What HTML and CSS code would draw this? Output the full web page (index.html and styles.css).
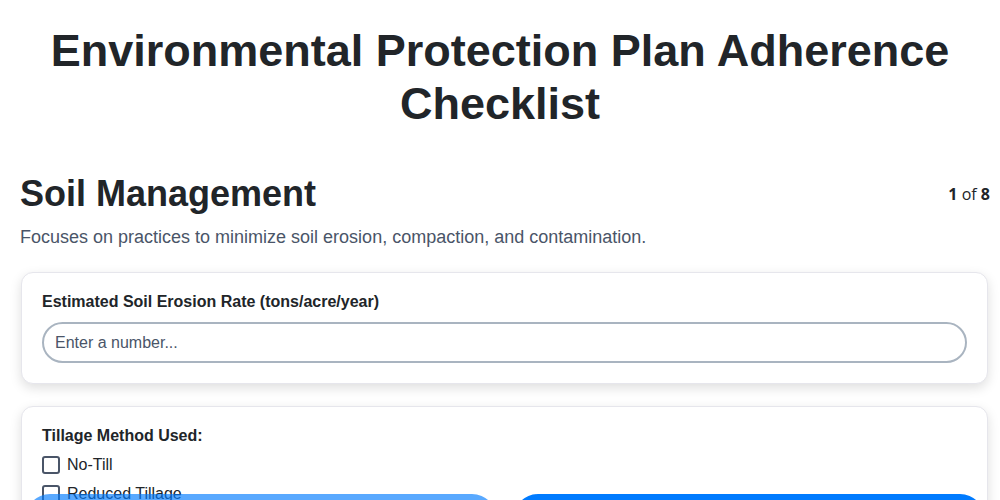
FILE: index.html
```html
<!DOCTYPE html>
<html>
<head>
  <meta charset="UTF-8">
  <title>Environmental Protection Plan Adherence Checklist</title>
  <meta name="viewport" content="width=device-width, initial-scale=1.0">
  <link rel="stylesheet" href="styles.css">
</head>
<body>
  <h1 class="page-title">Environmental Protection Plan Adherence Checklist</h1>

  <div class="section">
    <div class="section-head">
      <h2>Soil Management</h2>
      <div class="step-count"><b>1</b> of <b>8</b></div>
    </div>
    <p class="section-desc">Focuses on practices to minimize soil erosion, compaction, and contamination.</p>

    <div class="question-card">
      <label class="q-label" for="erosionRate">Estimated Soil Erosion Rate (tons/acre/year)</label>
      <input type="text" id="erosionRate" class="q-input" placeholder="Enter a number...">
    </div>

    <div class="question-card">
      <div class="q-label">Tillage Method Used:</div>
      <label class="check-row"><input type="checkbox"> No-Till</label>
      <label class="check-row"><input type="checkbox"> Reduced Tillage</label>
      <label class="check-row"><input type="checkbox"> Conventional Tillage</label>
    </div>
  </div>

  <div class="nav-buttons">
    <button class="nav-btn" disabled>Previous</button>
    <button class="nav-btn">Next</button>
  </div>
</body>
</html>
```

FILE: styles.css
```css
body { font-family: "Liberation Sans", Arial, sans-serif; margin: 0; padding: 0; background-color: #fff; color: #212529; }
.page-title {
  font-size: 45px;
  line-height: 53px;
  text-align: center;
  margin: 24px 40px 0;
}
.section { padding: 0 10px 0 20px; }
.section-head {
  display: flex;
  justify-content: space-between;
  align-items: center;
  margin-top: 42px;
}
.section-head h2 { font-size: 36px; line-height: 44px; margin: 0; }
.step-count { font-family: "Open Sans", sans-serif; font-size: 16px; }
.section-desc {
  font-size: 18px;
  line-height: 27px;
  color: #4a5568;
  margin: 8px 0 21px;
}
.question-card {
  background: #fff;
  border: 1px solid #e6e6ec;
  border-radius: 12px;
  box-shadow: 0 4px 12px rgba(0,0,0,0.13);
  padding: 19px 20px 20px;
  margin: 0 2px 22px 1px;
}
.q-label {
  display: block;
  font-size: 16px;
  font-weight: bold;
  line-height: 20px;
  margin-bottom: 10px;
}
.q-input {
  display: block;
  width: 100%;
  box-sizing: border-box;
  height: 41px;
  border: 2px solid #a9b4c0;
  border-radius: 21px;
  padding: 0 11px;
  font-family: "Liberation Sans", Arial, sans-serif;
  font-size: 16px;
  color: #212529;
  outline: none;
}
.q-input::placeholder { color: #4a5568; }
.question-card .q-label + .check-row { margin-top: -3px; }
.check-row {
  display: flex;
  align-items: center;
  gap: 7px;
  font-size: 16px;
  line-height: 24px;
  margin-bottom: 5px;
}
.check-row input {
  appearance: none;
  -webkit-appearance: none;
  width: 18px;
  height: 18px;
  margin: 0;
  border: 2px solid #4a5568;
  border-radius: 3px;
  background: #fff;
}
.nav-buttons {
  position: fixed;
  left: 25px;
  right: 15px;
  bottom: -44px;
  display: flex;
  gap: 16px;
}
.nav-btn {
  flex: 1;
  height: 50px;
  border: none;
  border-radius: 25px;
  background-color: #007bff;
  color: #fff;
  font-family: "Liberation Sans", Arial, sans-serif;
  font-size: 18px;
  font-weight: bold;
}
.nav-btn:disabled { opacity: 0.65; }
```
